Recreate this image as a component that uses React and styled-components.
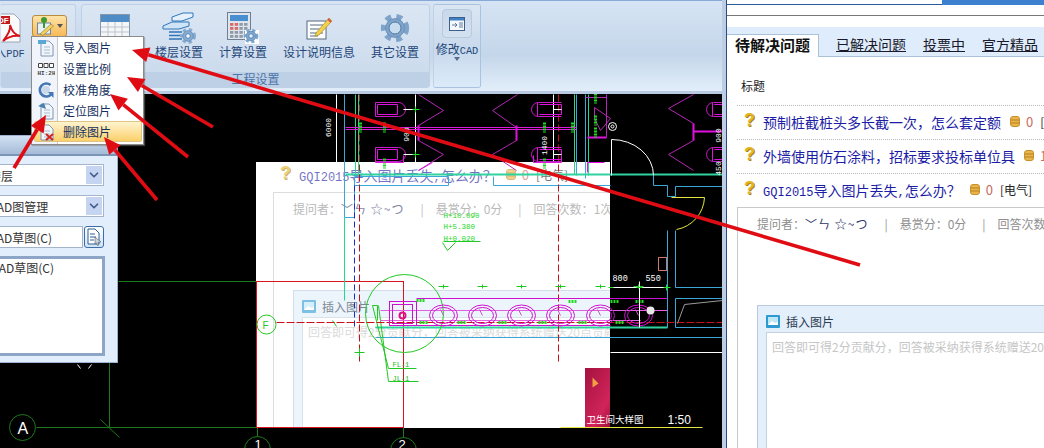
import React from 'react';
import styled, { createGlobalStyle } from 'styled-components';
import { ChevronDown } from 'lucide-react';

const GlobalStyle = createGlobalStyle`
  html, body { margin: 0; padding: 0; background: #fff; }
  body { font-family: "Noto Sans CJK SC", "Liberation Sans", sans-serif; font-size: 12px; }
`;

const Page = styled.div`
  position: relative;
  display: flex;
  width: 1044px;
  height: 448px;
  overflow: hidden;
  white-space: nowrap;
`;
const AppWindow = styled.div`
  display: flex;
  flex-direction: column;
  width: 722px;
  flex: none;
`;
const Divider = styled.div`
  width: 4px;
  flex: none;
  background: #bccde6;
  border-right: 1px solid #2c4a80;
`;

/* ribbon */
const Ribbon = styled.div`
  display: flex;
  align-items: flex-start;
  height: 94px;
  flex: none;
  box-sizing: border-box;
  padding-top: 3px;
  background: linear-gradient(#d6e4f4, #c4d6ea 60%, #e2eefa);
  border-top: 1px solid #86a9d8;
  border-bottom: 3px solid #b9cbe2;
  color: #24477a;
`;
const Group = styled.div`
  display: flex;
  flex-direction: column;
  flex: none;
  height: 84px;
  width: ${(p) => p.$width}px;
  margin-left: ${(p) => p.$left || 0}px;
  box-sizing: border-box;
  border: 1px solid ${(p) => (p.$framed ? '#a9c3de' : '#c0d1e5')};
  border-left-color: ${(p) => (p.$open ? 'transparent' : '#c0d1e5')};
  border-radius: 3px;
  background: linear-gradient(#dbe6f3, #c9d9ec);
  overflow: hidden;
`;
const GroupBody = styled.div`
  display: flex;
  flex: 1;
  gap: ${(p) => p.$gap || 0}px;
  padding: 7px 0 0 ${(p) => p.$pad || 0}px;
`;
const GroupLabel = styled.div`
  height: 15px;
  line-height: 14px;
  flex: none;
  text-align: center;
  color: #4b74a6;
  background: #bed0e6;
`;
const RibbonItem = styled.div`
  display: flex;
  flex-direction: column;
  align-items: center;
  flex: none;
  width: ${(p) => p.$width}px;
  margin-left: ${(p) => p.$left || 0}px;
`;
const ItemIcon = styled.div`
  display: flex;
  align-items: center;
  justify-content: center;
  height: 32px;
`;
const ItemLabel = styled.div`
  height: 16px;
  line-height: 16px;
  color: #24477a;
`;
const Latin = styled.span`
  font-family: "Liberation Mono", monospace;
  font-size: 0.86em;
`;
const OrangeButton = styled.div`
  display: flex;
  align-items: center;
  justify-content: center;
  gap: 3px;
  width: 35px;
  height: 22px;
  margin: 3px 0 0 9px;
  box-sizing: border-box;
  border: 1px solid #b98c3e;
  border-radius: 3px;
  background: linear-gradient(#fde3a8, #f8b956);
`;
const Caret = styled.span`
  width: 0;
  height: 0;
  border: 3px solid transparent;
  border-top: 4px solid ${(p) => p.$color || '#555'};
  border-bottom: 0;
  flex: none;
`;
const CadButton = styled.div`
  display: flex;
  align-items: center;
  justify-content: center;
  width: 30px;
  height: 29px;
  margin-bottom: 3px;
  box-sizing: border-box;
  border: 1px solid #b6c9df;
  border-radius: 4px;
  background: linear-gradient(#c9d8ea, #d4e1ef);
`;
const CadGroupBody = styled.div`
  display: flex;
  flex-direction: column;
  align-items: center;
  flex: 1;
  padding-top: 4px;
  background: linear-gradient(#dbe6f3, #c8d9ec 55%, #dcebf9);
`;

/* dropdown menu from the orange button */
const Menu = styled.div`
  position: absolute;
  left: 31px;
  top: 36px;
  width: 113px;
  height: 109px;
  box-sizing: border-box;
  border: 1px solid #8b8b8b;
  background: linear-gradient(to right, #f1f5fb 25px, #c9c9c9 25px, #c9c9c9 26px, #fff 26px);
  box-shadow: 1px 1px 1px rgba(120, 120, 120, 0.5);
`;
const MenuRow = styled.div`
  display: flex;
  align-items: center;
  height: 21px;
  box-sizing: border-box;
  margin: ${(p) => (p.$active ? '0 1px 0 2px' : '0')};
  padding-left: ${(p) => (p.$active ? 2 : 5)}px;
  color: #14305c;
  border: ${(p) => (p.$active ? '1px solid #dfc582' : '0')};
  border-radius: 2px;
  background: ${(p) => (p.$active ? 'linear-gradient(#fff4cf, #fbd06a)' : 'transparent')};
`;
const MenuIcon = styled.span`
  display: flex;
  width: 26px;
  flex: none;
`;

/* canvas */
const Canvas = styled.div`
  position: relative;
  flex: 1;
  background: #000;
  overflow: hidden;
`;
const Drawing = styled.svg`
  position: absolute;
  left: 0;
  top: 0;
`;
const PastedShot = styled.div`
  position: absolute;
  left: 256px;
  top: 68px;
  width: 354px;
  height: 266px;
  padding-left: 17px;
  box-sizing: border-box;
  background: #fff;
  overflow: hidden;
`;
const PastedFade = styled.div`
  margin-top: -4px;
  opacity: 0.62;
`;
const Poster = styled.div`
  position: absolute;
  right: 0;
  bottom: 0;
  width: 25px;
  height: 60px;
  background: linear-gradient(120deg, #a5123f, #d0245a 70%, #a01038);
`;

/* floating property panel */
const FloatPanel = styled.div`
  position: absolute;
  left: -30px;
  top: 41px;
  width: 148px;
  height: 228px;
  box-sizing: border-box;
  border: 1px solid #9db2cf;
  background: #e2eefb;
`;
const PanelTitle = styled.div`
  height: 18px;
  background: linear-gradient(#d2e1f3, #a5bbd6);
  border-bottom: 2px solid #7b95b8;
`;
const PanelBody = styled.div`
  display: flex;
  flex-direction: column;
  gap: 9px;
  padding: 8px 13px 0 4px;
  color: #333;
`;
const Field = styled.div`
  display: flex;
  flex: ${(p) => (p.$grow ? 1 : 'none')};
  align-items: center;
  justify-content: space-between;
  height: 22px;
  box-sizing: border-box;
  padding: 0 1px 0 13px;
  border: 1px solid #a3b4cb;
  background: #fff;
`;
const FieldArrow = styled.span`
  display: flex;
  align-items: center;
  justify-content: center;
  width: 16px;
  height: 18px;
  background: #c5d5f1;
  color: #475c8e;
`;
const FieldRow = styled.div`
  display: flex;
  gap: 1px;
`;
const FileButton = styled.div`
  display: flex;
  align-items: center;
  justify-content: center;
  flex: none;
  width: 20px;
  height: 22px;
  box-sizing: border-box;
  border: 1px solid #3b6ea6;
  border-radius: 3px;
  background: linear-gradient(#fff, #cfe3f7);
`;
const ListBox = styled.div`
  height: 100px;
  margin: -1px -1px 0 0;
  padding: 0 0 0 13px;
  box-sizing: border-box;
  border: 3px solid #8da6c8;
  background: #fff;
  line-height: 18px;
`;

/* right panel: question list */
const WebPanel = styled.div`
  flex: 1;
  min-width: 0;
  background: #fff;
  overflow: hidden;
`;
const TopStrip = styled.div`
  display: flex;
  height: 5px;
`;
const TopStripLeft = styled.div`
  width: 215px;
  box-sizing: border-box;
  border-bottom: 1px solid #2a5a9a;
`;
const TopStripRight = styled.div`
  flex: 1;
  background: #3d80cf;
`;
const GreyRule = styled.div`
  height: 11px;
  margin-top: 10px;
  border-top: 1px solid #777;
`;
const TabBar = styled.div`
  display: flex;
  align-items: flex-end;
  height: 29px;
  background: #deecfb;
  border-bottom: 1px solid #a8c2dc;
`;
const ActiveTab = styled.div`
  width: 92px;
  height: 23px;
  margin-bottom: -1px;
  padding-left: 8px;
  box-sizing: border-box;
  line-height: 20px;
  font-size: 15px;
  font-weight: 700;
  color: #111;
  background: #fff;
  border: 1px solid #a8c2dc;
  border-width: 1px 1px 0 0;
`;
const Tab = styled.a`
  height: 22px;
  line-height: 20px;
  margin-left: 17px;
  font-size: 14px;
  color: #1a1a2a;
  text-decoration: underline;
`;
const ListHead = styled.div`
  height: 48px;
  padding: 20px 0 0 14px;
  box-sizing: border-box;
  line-height: 18px;
  color: #222;
`;
const ListArea = styled.div`
  padding-left: 10px;
`;
const QuestionRow = styled.div`
  display: flex;
  align-items: center;
  height: 34px;
  padding: 0 0 2px 7px;
  box-sizing: border-box;
  border-top: 1px dotted #bbb;
`;
const QuestionMark = styled.span`
  width: 19px;
  flex: none;
  margin-top: -4px;
  font: 700 18px/18px "Liberation Sans", sans-serif;
  color: #e4b422;
  text-shadow: 1px 1px 0 #a8841a;
`;
const QuestionTitle = styled.span`
  font-size: 14px;
  color: #1c1ca6;
`;
const CoinWrap = styled.span`
  display: flex;
  flex: none;
  margin: 0 6px 0 9px;
`;
const Score = styled.span`
  font-size: 13px;
  color: #c96a5e;
  margin-right: 7px;
`;
const Category = styled.span`
  font-size: 12px;
  color: #222;
`;
const DetailBox = styled.div`
  height: 262px;
  border: 1px solid #c9c9c9;
  border-right: 0;
  overflow: hidden;
`;
const MetaRow = styled.div`
  display: flex;
  align-items: center;
  height: 18px;
  margin-top: 6px;
  padding-left: 19px;
  color: #8f8f8f;
`;
const AskerName = styled.span`
  color: #2c3568;
  letter-spacing: 1px;
`;
const MetaBar = styled.span`
  margin: 0 12px 0 16px;
  color: #999;
`;
const InsertBox = styled.div`
  width: 420px;
  margin: 73px 0 0 19px;
  padding-left: 8px;
  box-sizing: border-box;
  border: 1px solid #b8cadc;
  background: #e3effb;
`;
const InsertHead = styled.div`
  display: flex;
  align-items: center;
  gap: 6px;
  height: 26px;
  padding-top: 4px;
  box-sizing: border-box;
  color: #2b3b50;
`;
const InsertArea = styled.div`
  height: 180px;
  padding: 5px 0 0 5px;
  box-sizing: border-box;
  border: 1px solid #c3d2e0;
  background: #fff;
  color: #c6c6c6;
`;
const ArrowLayer = styled.svg`
  position: absolute;
  left: 0;
  top: 0;
  pointer-events: none;
`;

/* icons */
const Gear = ({ x, y, r, fill = '#6d9ccc' }) => (
  <g>
    <circle cx={x} cy={y} r={r * 1.02} fill="none" stroke={fill} strokeWidth={r * 0.42} strokeDasharray={`${r * 0.52} ${r * 0.46}`} />
    <circle cx={x} cy={y} r={r * 0.82} fill={fill} stroke="#4a78a8" strokeWidth="0.6" />
    <circle cx={x} cy={y} r={r * 0.36} fill="#eef4fb" stroke="#4a78a8" strokeWidth="0.8" />
  </g>
);
const PdfIcon = () => (
  <svg width="34" height="30" viewBox="0 0 34 30">
    <path d="M4 1H27L33 7V29H4Z" fill="#fafafa" stroke="#9aa6b5" />
    <rect x="4" y="3" width="19" height="8" fill="#c4181c" />
    <text x="11" y="10" fontSize="8" fontWeight="700" fill="#fff" fontFamily="Liberation Sans">DF</text>
    <path d="M16 28C20 23 24 16 23 12C25 19 28 22 33 23C27 22 21 24 16 28Z" fill="none" stroke="#d4161b" strokeWidth="2" />
  </svg>
);
const PinPencilIcon = () => (
  <svg width="17" height="20" viewBox="0 0 17 20">
    <rect x="0.5" y="7" width="13" height="11" fill="#e8f0f8" stroke="#6a87a8" />
    <circle cx="7" cy="4" r="3" fill="#3f9a30" />
    <path d="M7 6V12" stroke="#3f9a30" strokeWidth="2" />
    <path d="M3 18L14 8L16.5 10L6 19.5Z" fill="#f2d25c" stroke="#8a7432" strokeWidth="0.6" />
  </svg>
);
const TableIcon = () => (
  <svg width="30" height="28" viewBox="0 0 30 28">
    <rect x="0.5" y="0.5" width="29" height="27" fill="#f4f6f8" stroke="#8798aa" />
    <rect x="1" y="1" width="28" height="7" fill="#4f8cc6" />
    <path d="M1 13H29M1 18H29M1 23H29M8 8V27M15 8V27M22 8V27" stroke="#bcc5cf" />
  </svg>
);
const FloorIcon = () => (
  <svg width="34" height="32" viewBox="0 0 34 32">
    <path d="M10 5L21 1H31V5L20 9H10Z" fill="#e4f0fb" stroke="#2f76b8" />
    <path d="M1 14L10 10H27V14L17 17H1Z" fill="#cfe4f7" stroke="#2f76b8" />
    <path d="M7 20H20M7 23.5H20M7 27H20" stroke="#2f76b8" strokeWidth="1.4" />
    <Gear x={26} y={24} r={6.5} fill="#87add2" />
  </svg>
);
const CalcIcon = () => (
  <svg width="32" height="32" viewBox="0 0 32 32">
    <rect x="0.5" y="0.5" width="23" height="27" fill="#dfe5ec" stroke="#6f7f91" />
    <rect x="3" y="3" width="18" height="6" fill="#4a8fd0" />
    {[0, 1, 2, 3].flatMap((r) =>
      [0, 1, 2, 3].map((c) => (
        <rect key={`${r}-${c}`} x={3 + c * 4.7} y={11 + r * 4} width="3.4" height="2.8" fill={c < 2 && r < 2 ? '#d86a6a' : '#8e9aa8'} />
      ))
    )}
    <rect x="18" y="18" width="14" height="14" fill="#fff" />
    <Gear x={24} y={24} r={6} fill="#7ea8d0" />
  </svg>
);
const NoteIcon = () => (
  <svg width="26" height="24" viewBox="0 0 26 24">
    <rect x="1" y="5" width="19" height="18" fill="#fdfdfd" stroke="#566a80" />
    <path d="M4 9H17M4 13H14M4 17H17M4 20H12" stroke="#566a80" />
    <path d="M10 17L23 2L26 5L13 19L9 20Z" fill="#f3d04b" stroke="#a88a2a" strokeWidth="0.7" />
    <path d="M22 3L25 6" stroke="#d9574a" strokeWidth="2" />
  </svg>
);
const BigGear = () => (
  <svg width="30" height="30" viewBox="0 0 30 30">
    <Gear x={15} y={15} r={11.5} fill="#7fa4cb" />
    <circle cx="15" cy="15" r="6" fill="#c8dcf0" stroke="#54799f" />
  </svg>
);
const CadWindowIcon = () => (
  <svg width="16" height="14" viewBox="0 0 16 14">
    <rect x="0.5" y="0.5" width="15" height="13" fill="#f4f8fc" stroke="#3d5f8a" />
    <rect x="1" y="1" width="14" height="2.5" fill="#3f7fc4" />
    <path d="M3 8H8M6 6L8 8L6 10M10 6H14M10 8H14M10 10H14" stroke="#3d5f8a" strokeWidth="0.8" fill="none" />
  </svg>
);
const DocBase = ({ children }) => (
  <svg width="18" height="18" viewBox="0 0 18 18">
    <path d="M4 2H12L16 6V17H4Z" fill="#f2f6fb" stroke="#7f96b4" />
    <path d="M7 8H13M7 11H13M7 14H13" stroke="#a9bbd0" />
    {children}
  </svg>
);
const ImportIcon = () => (
  <DocBase>
    <path d="M1 1H9V5H1Z" fill="#5aa7d8" />
  </DocBase>
);
const ScaleIcon = () => (
  <svg width="18" height="18" viewBox="0 0 18 18">
    <path d="M1.5 3.5H5.5V7.5H1.5ZM7 3.5H11V7.5H7ZM12.5 3.5H16.5V7.5H12.5Z" fill="#fff" stroke="#444" />
    <text x="0.5" y="15" fontSize="6" fontWeight="700" fill="#444" fontFamily="Liberation Mono">HI:2H</text>
  </svg>
);
const RotateIcon = () => (
  <svg width="18" height="18" viewBox="0 0 18 18">
    <circle cx="9" cy="9" r="4" fill="#c8d8ea" />
    <path d="M13.5 4A6.5 6.5 0 1 0 14.5 13" fill="none" stroke="#4477b4" strokeWidth="2.6" />
    <path d="M11 11H16.5V17Z" fill="#4477b4" />
  </svg>
);
const LocateIcon = () => (
  <DocBase>
    <path d="M1 4L7 1L9 7Z" fill="#4a7fb0" />
  </DocBase>
);
const DeleteIcon = () => (
  <DocBase>
    <path d="M9 11L16 17M16 11L9 17" stroke="#d2201c" strokeWidth="2" />
  </DocBase>
);
const FileCursorIcon = () => (
  <svg width="16" height="18" viewBox="0 0 16 18">
    <path d="M2 1H9L13 5V16H2Z" fill="#fff" stroke="#2f5f96" />
    <path d="M4 6H9M4 9H10M4 12H8" stroke="#2f5f96" />
    <path d="M9 9L15 14L12 14.5L13 17L11.5 17.5L10.5 15L9 16Z" fill="#c9d3de" stroke="#444" strokeWidth="0.5" />
  </svg>
);
const CoinIcon = () => (
  <svg width="10" height="11" viewBox="0 0 10 11">
    <rect x="0.5" y="0.5" width="9" height="10" rx="2.5" fill="#e8b54a" stroke="#c88f2a" />
    <path d="M1 4H9M1 7H9" stroke="#b97e20" />
  </svg>
);
const PictureIcon = () => (
  <svg width="14" height="13" viewBox="0 0 14 13">
    <rect width="14" height="13" rx="1" fill="#2e9ad2" />
    <rect x="2" y="2" width="10" height="8" fill="#bfe6f7" />
    <path d="M2 10L6 6L9 8L12 7V10Z" fill="#fff" />
  </svg>
);

/* cad drawing, page coordinates */
const capsules = [
  { x: 375, y: 102 }, { x: 375, y: 147 },
  { x: 533, y: 102, flip: true }, { x: 533, y: 147, flip: true },
  { x: 708, y: 102, flip: true }, { x: 708, y: 147, flip: true },
];
const greenTags = [
  [360, 127], [384, 127], [544, 127], [572, 127], [384, 163], [544, 163],
  [595, 98], [595, 120], [595, 132],
];
const pipes = [443, 482, 521, 560, 600, 638];
const pipeTags = [[416, 300], [419, 322], [457, 322], [498, 322], [538, 322], [578, 322], [568, 301], [610, 301], [635, 301], [615, 322]];
const whiteDims = [
  { x: 330, y: 127, t: '6000' }, { x: 408, y: 134, t: '900' }, { x: 546, y: 145, t: '1400' },
  { x: 720, y: 135, t: '900' }, { x: 720, y: 168, t: '450' },
];

const CadDrawing = () => (
  <Drawing width="722" height="354" viewBox="0 94 722 354" fill="none">
    <g transform="translate(0.5 0.5)">
      {/* grid and axis */}
      <path d="M118 281H256M36 427H256M109 362V427M100 419L119 437" stroke="#1c7a1c" />
      <circle cx="22" cy="427" r="13" stroke="#1c7a1c" />
      <circle cx="257" cy="449" r="13" stroke="#1c7a1c" />
      <circle cx="403" cy="450" r="13" stroke="#1c7a1c" />
      <path d="M257 427V436M403 427V437" stroke="#1c7a1c" />
      <path d="M77 364L80 368M91 364L88 368" stroke="#fff" />
      <text x="17" y="433" fontSize="16" fill="#fff" fontFamily="Liberation Sans">A</text>
      <text x="254" y="448" fontSize="13" fill="#fff" fontFamily="Liberation Sans">1</text>
      <text x="398" y="448" fontSize="13" fill="#fff" fontFamily="Liberation Sans">2</text>
      <rect x="256" y="281" width="147" height="146" stroke="#d8141c" />

      {/* walls top */}
      <path d="M336 94V162M553 94V162M415 94V162" stroke="#fff" />
      <path d="M344 94V217H354V176H448V185H354M576 94V175M585 94V178M493 176V185H610M653 175V185H667V196H675V186H722M667 230V327H375M675 230V287H722M675 298H722V327H675ZM375 337H722" stroke="#3aa7d8" />
      <path d="M344 217V300M355 94V174M358 94V174M574 94V174M588 94V175" stroke="#22d88a" />
      <path d="M345 174H722" stroke="#2fd3a0" strokeWidth="2" />
      <path d="M375 327H667" stroke="#2fd3a0" strokeWidth="2" />
      <path d="M359 94V363M558 94V363" stroke="#c8101c" strokeDasharray="7 3" />
      <path d="M354 185V327" stroke="#1a2ad0" strokeDasharray="6 3" />

      {/* sanitary */}
      <path d="M345 127H576M345 129H576" stroke="#d81cd8" />
      <path d="M418 94L443 110L418 125V140L443 154L418 170M517 94L492 110L516 127V140L492 154L516 170M693 94L668 108L693 123V140L668 154L693 170M606 94V137M585 97H606M594 107L610 118L600 130L594 118Z" stroke="#b526b5" />
      <path d="M418 125V140M516 125V140M694 131H722M693 123V140M587 137H606" stroke="#e010e0" strokeWidth="2" />
      {capsules.map(({ x, y, flip }, i) => (
        <g key={i} stroke="#c81cc8">
          <path d={flip ? `M${x + 28} ${y}H${x + 5}A7 7 0 0 0 ${x + 5} ${y + 14}H${x + 28}` : `M${x} ${y}H${x + 23}A7 7 0 0 1 ${x + 23} ${y + 14}H${x}Z`} />
          <path d={flip ? `M${x + 4} ${y}V${y + 14}M${x + 6} ${y + 2}H${x + 28}V${y + 12}H${x + 6}` : `M${x + 2} ${y + 2}H${x + 22}V${y + 12}H${x + 2}Z`} stroke="#e010e0" />
        </g>
      ))}
      <path d="M403 109H418M403 154H418M553 109H561M553 154H561" stroke="#fff" />
      <path d="M412 109H419M415 106V112M412 154H419M415 151V157" stroke="#22e022" />
      {greenTags.map(([x, y], i) => (
        <path key={i} d={`M${x} ${y - 5}V${y + 5}`} stroke="#22d822" strokeWidth="3" strokeDasharray="2 1" />
      ))}
      {whiteDims.map(({ x, y, t }) => (
        <text key={`${x}-${y}`} transform={`rotate(-90 ${x} ${y})`} x={x} y={y} textAnchor="middle" fontSize="8" fill="#fff" fontFamily="Liberation Mono">{t}</text>
      ))}
      <circle cx="612" cy="126" r="4" stroke="#fff" />
      <circle cx="612" cy="126" r="1.5" stroke="#fff" />
      <path d="M611 175V139A42 36 0 0 1 653 175" stroke="#fff" />
      <path d="M671 197H704A34 34 0 0 1 676 229" stroke="#e6e640" />
      <path d="M587 172V162H604" stroke="#e010e0" />
      <rect x="658" y="257" width="8" height="13" stroke="#d07868" />
      <path d="M375 155V162H403V155M418 170L432 162M533 155V162H561V155" stroke="#d81cd8" />
      <path d="M592 377L598 383L592 387Z" fill="#f0a040" />

      {/* elevations over the pasted picture */}
      <g fontFamily="Liberation Mono" fontSize="7.5" fill="#22d822">
        <text x="443" y="217">H+10.090</text>
        <text x="443" y="228">H+5.380</text>
        <text x="443" y="240">H+0.020</text>
      </g>
      <path d="M443 241H480M442 242L447 250L455 242" stroke="#22c822" />
      <circle cx="404" cy="313" r="39" stroke="#22c822" />
      <circle cx="266" cy="324" r="9.5" stroke="#22c822" />
      <text x="262" y="328" fontSize="10" fill="#22c822" fontFamily="Liberation Sans">F</text>
      <path d="M332 320L336 326M354 352H364M359 348V356M372 305L388 368H416M378 305L388 381H418M372 305H377V320" stroke="#22c822" />
      <g fontFamily="Liberation Mono" fontSize="7" fill="#22b822">
        <text x="392" y="366">FL-1</text>
        <text x="392" y="380">JL-1</text>
      </g>
      <path d="M276 322H722" stroke="#c8101c" strokeDasharray="8 2" />

      {/* pipe run */}
      <path d="M416 298H667M416 325H610" stroke="#d010d0" />
      <path d="M380 310H667M380 320H640" stroke="#e060e0" />
      <rect x="389" y="301" width="27" height="24" stroke="#d010d0" />
      <rect x="392" y="304" width="20" height="19" stroke="#d010d0" />
      <circle cx="402" cy="315" r="3" stroke="#e0108a" strokeWidth="2" />
      {pipes.map((x) => (
        <g key={x}>
          <ellipse cx={x} cy="315" rx="14" ry="10.5" stroke="#d010d0" />
          <ellipse cx={x} cy="315" rx="11" ry="8" stroke="#d010d0" />
          <path d={`M${x - 3} 309L${x} 315`} stroke="#cf50cf" />
          <path d={`M${x - 5} 286H${x + 5}M${x} 284V288`} stroke="#22c822" />
        </g>
      ))}
      {pipeTags.map(([x, y], i) => (
        <path key={i} d={`M${x} ${y}H${x + 9}`} stroke="#22d822" strokeWidth="3" strokeDasharray="2 1" />
      ))}
      <circle cx="650" cy="310" r="4" fill="#e8e8e8" />
      <path d="M610 287H667M639 281V327" stroke="#fff" />
      <path d="M608 287H613M636 287H642M663 287H670M666 284V290" stroke="#22e022" />
      <path d="M610 352H722" stroke="#fff" />
      <path d="M677 323L684 304L722 300" stroke="#9a9a9a" />
      <path d="M560 427H702" stroke="#e6e640" />
      <g fontFamily="Liberation Mono" fontSize="8.5" fill="#fff">
        <text x="612" y="280">800</text>
        <text x="645" y="280">550</text>
      </g>
      <text x="586" y="422" fontSize="9.5" fill="#fff">卫生间大样图</text>
      <text x="667" y="423" fontSize="12" fill="#fff" fontFamily="Liberation Sans">1:50</text>
    </g>
  </Drawing>
);

const arrows = [
  { from: [860, 265], to: [132, 50] },
  { from: [213, 127], to: [127, 77] },
  { from: [188, 157], to: [110, 94] },
  { from: [157, 200], to: [104, 137] },
  { from: [14, 168], to: [46, 115] },
];

const RedArrow = ({ from, to }) => {
  const dx = to[0] - from[0];
  const dy = to[1] - from[1];
  const len = Math.hypot(dx, dy);
  const ux = dx / len;
  const uy = dy / len;
  const bx = to[0] - ux * 17;
  const by = to[1] - uy * 17;
  const head = [
    to,
    [bx - uy * 7.5, by + ux * 7.5],
    [bx + uy * 7.5, by - ux * 7.5],
  ];
  return (
    <g fill="#e00c14" stroke="#e00c14">
      <line x1={from[0]} y1={from[1]} x2={bx} y2={by} strokeWidth="3.6" />
      <polygon points={head.map((p) => p.join(',')).join(' ')} stroke="none" />
    </g>
  );
};

const menuItems = [
  { label: '导入图片', Icon: ImportIcon },
  { label: '设置比例', Icon: ScaleIcon },
  { label: '校准角度', Icon: RotateIcon },
  { label: '定位图片', Icon: LocateIcon },
  { label: '删除图片', Icon: DeleteIcon, active: true },
];

const settings = [
  { label: '工程信息', width: 48, Icon: TableIcon },
  { label: '楼层设置', width: 48, Icon: FloorIcon },
  { label: '计算设置', width: 48, Icon: CalcIcon },
  { label: '设计说明信息', width: 72, Icon: NoteIcon },
  { label: '其它设置', width: 48, Icon: BigGear },
];

// full-width punctuation, the width matters for the row layout
const COMMA = '\uFF0C';
const COLON = '\uFF1A';
const ASK = '\uFF1F';

const questions = [
  { title: `预制桩截桩头多长截一次${COMMA}怎么套定额`, score: 0 },
  { title: `外墙使用仿石涂料${COMMA}招标要求投标单位具`, score: 1 },
];

const CoinScore = ({ score, category }) => (
  <>
    <CoinWrap><CoinIcon /></CoinWrap>
    <Score>{score}</Score>
    <Category>{category}</Category>
  </>
);

// same block is shown live on the right and pasted into the cad window
const QuestionDetail = () => (
  <>
    <QuestionRow>
      <QuestionMark>?</QuestionMark>
      <QuestionTitle><Latin>GQI2015</Latin>导入图片丢失<Latin>,</Latin>怎么办{ASK}</QuestionTitle>
      <CoinScore score={0} category="[电气]" />
    </QuestionRow>
    <DetailBox>
      <MetaRow>
        提问者{COLON}<AskerName>﹀ㄣ ☆~つ</AskerName>
        <MetaBar>|</MetaBar>
        悬赏分{COLON}0分
        <MetaBar>|</MetaBar>
        回答次数{COLON}1次
      </MetaRow>
      <InsertBox>
        <InsertHead><PictureIcon />插入图片</InsertHead>
        <InsertArea>回答即可得2分贡献分{COMMA}回答被采纳获得系统赠送20点贡献分</InsertArea>
      </InsertBox>
    </DetailBox>
  </>
);

const App = () => (
  <Page>
    <GlobalStyle />
    <AppWindow>
      <Ribbon>
        <Group $width={76} $open>
          <GroupBody>
            <RibbonItem $width={39} $left={-17}>
              <ItemIcon><PdfIcon /></ItemIcon>
              <ItemLabel>导入<Latin>PDF</Latin></ItemLabel>
            </RibbonItem>
            <OrangeButton><PinPencilIcon /><Caret /></OrangeButton>
          </GroupBody>
          <GroupLabel />
        </Group>
        <Group $width={349} $left={5}>
          <GroupBody $pad={9} $gap={16}>
            {settings.map(({ label, width, Icon }) => (
              <RibbonItem key={label} $width={width}>
                <ItemIcon><Icon /></ItemIcon>
                <ItemLabel>{label}</ItemLabel>
              </RibbonItem>
            ))}
          </GroupBody>
          <GroupLabel>工程设置</GroupLabel>
        </Group>
        <Group $width={48} $left={3} $framed>
          <CadGroupBody>
            <CadButton><CadWindowIcon /></CadButton>
            <ItemLabel>修改<Latin>CAD</Latin></ItemLabel>
            <Caret $color="#5a6d8a" />
          </CadGroupBody>
        </Group>
      </Ribbon>
      <Canvas>
        <PastedShot>
          <PastedFade><QuestionDetail /></PastedFade>
          <Poster />
        </PastedShot>
        <CadDrawing />
        <FloatPanel>
          <PanelTitle />
          <PanelBody>
            <Field>楼层<FieldArrow><ChevronDown size={14} strokeWidth={3} /></FieldArrow></Field>
            <Field>CAD图管理<FieldArrow><ChevronDown size={14} strokeWidth={3} /></FieldArrow></Field>
            <FieldRow>
              <Field $grow>CAD草图(C)</Field>
              <FileButton><FileCursorIcon /></FileButton>
            </FieldRow>
            <ListBox>CAD草图(C)</ListBox>
          </PanelBody>
        </FloatPanel>
      </Canvas>
    </AppWindow>
    <Divider />
    <WebPanel>
      <TopStrip><TopStripLeft /><TopStripRight /></TopStrip>
      <GreyRule />
      <TabBar>
        <ActiveTab>待解决问题</ActiveTab>
        <Tab>已解决问题</Tab>
        <Tab>投票中</Tab>
        <Tab>官方精品</Tab>
      </TabBar>
      <ListHead>标题</ListHead>
      <ListArea>
        {questions.map((q) => (
          <QuestionRow key={q.title}>
            <QuestionMark>?</QuestionMark>
            <QuestionTitle>{q.title}</QuestionTitle>
            <CoinScore score={q.score} category="[土建]" />
          </QuestionRow>
        ))}
        <QuestionDetail />
      </ListArea>
    </WebPanel>
    <Menu>
      {menuItems.map(({ label, Icon, active }) => (
        <MenuRow key={label} $active={active}>
          <MenuIcon><Icon /></MenuIcon>
          {label}
        </MenuRow>
      ))}
    </Menu>
    <ArrowLayer width="1044" height="448" viewBox="0 0 1044 448">
      {arrows.map((a, i) => (
        <RedArrow key={i} from={a.from} to={a.to} />
      ))}
    </ArrowLayer>
  </Page>
);

export default App;
